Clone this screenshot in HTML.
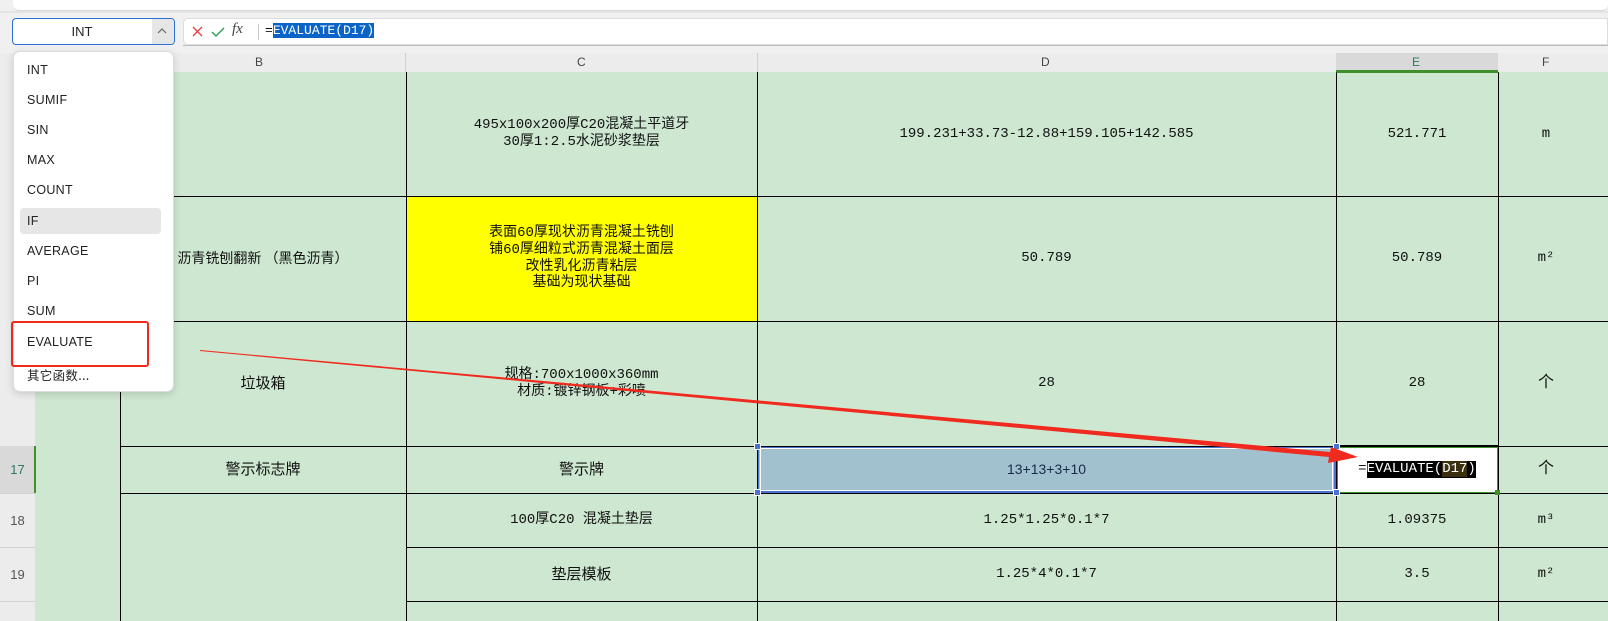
<!DOCTYPE html>
<html><head><meta charset="utf-8"><style>
*{margin:0;padding:0;box-sizing:border-box}
body{width:1608px;height:621px;overflow:hidden;background:#f0f0f0;position:relative;font-family:"Liberation Sans","Noto Sans CJK SC",sans-serif}
.a{position:absolute}
.cell{position:absolute;display:flex;align-items:center;justify-content:center;text-align:center;font-family:"Liberation Mono","Noto Sans CJK SC",monospace;font-size:14px;color:#111;line-height:16.7px;white-space:nowrap}
.hl{background:#000;position:absolute}
.vl{background:#000;position:absolute;width:1px}
.rh{position:absolute;left:0;width:35px;text-align:center;font-size:13px;color:#555;display:flex;align-items:center;justify-content:center;background:#ececec}
.mi{position:absolute;left:27px;font-size:12.5px;color:#222;letter-spacing:.3px}
</style></head><body>
<div class="a" style="left:13px;top:0;width:1595px;height:11px;background:#fff;border-bottom:1px solid #d8d8d8;border-radius:0 0 6px 6px"></div>
<div class="a" style="left:0;top:11px;width:1608px;height:2px;background:#e4e4e4"></div>
<div class="a" style="left:12px;top:18px;width:163px;height:27px;background:#fff;border:1px solid #2b6fd6;border-radius:4px"></div>
<div class="a" style="left:12px;top:24px;width:140px;text-align:center;font-size:13px;color:#222">INT</div>
<div class="a" style="left:152px;top:19px;width:22px;height:25px;background:#e6e6e6;border-radius:0 3px 3px 0"></div>
<svg class="a" style="left:155px;top:25px" width="14" height="12"><path d="M3 8 L7 4 L11 8" fill="none" stroke="#666" stroke-width="1.2"/></svg>
<div class="a" style="left:183px;top:18px;width:1425px;height:27px;background:#fff;border:1px solid #ddd;border-radius:5px 0 0 5px"></div>
<svg class="a" style="left:191px;top:25px" width="14" height="14"><path d="M2 2 L11 11 M11 2 L2 11" stroke="#e04040" stroke-width="1.3"/></svg>
<svg class="a" style="left:210px;top:25px" width="16" height="14"><path d="M2 7 L6 11 L14 3" fill="none" stroke="#2f9e5a" stroke-width="1.4"/></svg>
<div class="a" style="left:232px;top:21px;font-family:'Liberation Serif',serif;font-style:italic;font-size:15px;color:#444">fx</div>
<div class="a" style="left:258px;top:24px;width:1px;height:16px;background:#ccc"></div>
<div class="a" style="left:265px;top:23px;font-family:'Liberation Mono',monospace;font-size:13px;color:#111;line-height:16px">=<span style="background:#0a64c8;color:#fff">EVALUATE(D17)</span></div>
<div class="a" style="left:183px;top:45px;width:1425px;height:1px;background:#bbb"></div>
<div class="a" style="left:0;top:53px;width:1608px;height:19px;background:#ececec"></div>
<div class="a" style="left:1336px;top:53px;width:162px;height:19px;background:#d9d9d9"></div>
<div class="a" style="left:1336px;top:70px;width:162px;height:2px;background:#3f8f2a"></div>
<div class="a" style="left:405px;top:53px;width:1px;height:19px;background:#d0d0d0"></div>
<div class="a" style="left:757px;top:53px;width:1px;height:19px;background:#d0d0d0"></div>
<div class="a" style="left:255px;top:55px;font-size:12px;color:#444">B</div>
<div class="a" style="left:577px;top:55px;font-size:12px;color:#444">C</div>
<div class="a" style="left:1041px;top:55px;font-size:12px;color:#444">D</div>
<div class="a" style="left:1412px;top:55px;font-size:12px;color:#2a7a6a">E</div>
<div class="a" style="left:1542px;top:55px;font-size:12px;color:#444">F</div>
<div class="a" style="left:35px;top:72px;width:1573px;height:549px;background:#cde7d0"></div>
<div class="rh" style="top:72px;height:374px"></div>
<div class="rh" style="top:446px;height:47px;background:#d9d9d9;color:#2a7a6a">17</div>
<div class="rh" style="top:494px;height:53px">18</div>
<div class="rh" style="top:548px;height:53px">19</div>
<div class="rh" style="top:602px;height:19px"></div>
<div class="a" style="left:0;top:493px;width:35px;height:1px;background:#d0d0d0"></div>
<div class="a" style="left:0;top:547px;width:35px;height:1px;background:#d0d0d0"></div>
<div class="a" style="left:0;top:601px;width:35px;height:1px;background:#d0d0d0"></div>
<div class="a" style="left:34px;top:446px;width:2px;height:47px;background:#3f8f2a"></div>
<div class="a" style="left:406px;top:196px;width:351px;height:125px;background:#ffff00"></div>
<div class="a" style="left:757px;top:446px;width:579px;height:47px;background:#a2c1cf;border:2px solid #4a72d0"></div>
<div class="a" style="left:760px;top:448px;width:573px;height:43px;border:1px solid #fff"></div>
<div class="a" style="left:1336px;top:446px;width:163px;height:48px;background:#fff;border:2px solid #3f8f2a"></div>
<div class="hl" style="left:120px;top:196px;width:1488px;height:1px"></div>
<div class="hl" style="left:120px;top:321px;width:1488px;height:1px"></div>
<div class="hl" style="left:120px;top:446px;width:1488px;height:1px"></div>
<div class="hl" style="left:120px;top:493px;width:1488px;height:1px"></div>
<div class="hl" style="left:406px;top:547px;width:1202px;height:1px"></div>
<div class="hl" style="left:406px;top:601px;width:1202px;height:1px"></div>
<div class="vl" style="left:120px;top:72px;height:549px"></div>
<div class="vl" style="left:406px;top:72px;height:549px"></div>
<div class="vl" style="left:757px;top:72px;height:549px"></div>
<div class="vl" style="left:1336px;top:72px;height:549px"></div>
<div class="vl" style="left:1498px;top:72px;height:549px"></div>
<div class="a" style="left:1336px;top:72px;width:163px;height:374px;border:1px solid #000;border-top:1px solid #3f8f2a"></div>
<div class="a" style="left:754px;top:443px;width:7px;height:7px;background:#4a72d0;border:1px solid #fff"></div>
<div class="a" style="left:754px;top:489px;width:7px;height:7px;background:#4a72d0;border:1px solid #fff"></div>
<div class="a" style="left:1333px;top:443px;width:7px;height:7px;background:#4a72d0;border:1px solid #fff"></div>
<div class="a" style="left:1333px;top:489px;width:7px;height:7px;background:#4a72d0;border:1px solid #fff"></div>
<div class="a" style="left:1495px;top:490px;width:5px;height:5px;background:#3f8f2a"></div>
<div class="cell" style="left:406px;top:72px;width:351px;height:124px">495x100x200厚C20混凝土平道牙<br>30厚1:2.5水泥砂浆垫层</div>
<div class="cell" style="left:757px;top:72px;width:579px;height:124px">199.231+33.73-12.88+159.105+142.585</div>
<div class="cell" style="left:1336px;top:72px;width:162px;height:124px">521.771</div>
<div class="cell" style="left:1498px;top:72px;width:96px;height:124px">m</div>
<div class="cell" style="left:120px;top:196px;width:286px;height:125px;font-family:'Noto Sans CJK SC',sans-serif">沥青铣刨翻新 （黑色沥青）</div>
<div class="cell" style="left:406px;top:196px;width:351px;height:125px">表面60厚现状沥青混凝土铣刨<br>铺60厚细粒式沥青混凝土面层<br>改性乳化沥青粘层<br>基础为现状基础</div>
<div class="cell" style="left:757px;top:196px;width:579px;height:125px">50.789</div>
<div class="cell" style="left:1336px;top:196px;width:162px;height:125px">50.789</div>
<div class="cell" style="left:1498px;top:196px;width:96px;height:125px">m²</div>
<div class="cell" style="left:120px;top:321px;width:286px;height:125px;font-size:15px;font-family:'Noto Sans CJK SC',sans-serif">垃圾箱</div>
<div class="cell" style="left:406px;top:321px;width:351px;height:125px">规格:700x1000x360mm<br>材质:镀锌钢板+彩喷</div>
<div class="cell" style="left:757px;top:321px;width:579px;height:125px">28</div>
<div class="cell" style="left:1336px;top:321px;width:162px;height:125px">28</div>
<div class="cell" style="left:1498px;top:321px;width:96px;height:125px;font-size:16px">个</div>
<div class="cell" style="left:120px;top:446px;width:286px;height:47px;font-size:15px;font-family:'Noto Sans CJK SC',sans-serif">警示标志牌</div>
<div class="cell" style="left:406px;top:446px;width:351px;height:47px;font-size:15px;font-family:'Noto Sans CJK SC',sans-serif">警示牌</div>
<div class="cell" style="left:757px;top:446px;width:579px;height:47px;color:#1a2a4a;font-family:'Liberation Sans',sans-serif">13+13+3+10</div>
<div class="cell" style="left:1336px;top:446px;width:162px;height:47px">=<span style="background:#000;color:#fff">EVALUATE(<span style="background:#3a3010">D17</span>)</span></div>
<div class="cell" style="left:1498px;top:446px;width:96px;height:47px;font-size:16px">个</div>
<div class="cell" style="left:406px;top:493px;width:351px;height:54px;font-size:14px">100厚C20 混凝土垫层</div>
<div class="cell" style="left:757px;top:493px;width:579px;height:54px">1.25*1.25*0.1*7</div>
<div class="cell" style="left:1336px;top:493px;width:162px;height:54px">1.09375</div>
<div class="cell" style="left:1498px;top:493px;width:96px;height:54px">m³</div>
<div class="cell" style="left:406px;top:547px;width:351px;height:54px;font-size:15px;font-family:'Noto Sans CJK SC',sans-serif">垫层模板</div>
<div class="cell" style="left:757px;top:547px;width:579px;height:54px">1.25*4*0.1*7</div>
<div class="cell" style="left:1336px;top:547px;width:162px;height:54px">3.5</div>
<div class="cell" style="left:1498px;top:547px;width:96px;height:54px">m²</div>
<svg class="a" style="left:0;top:0" width="1608" height="621"><polygon points="200,350 1330,452 1331,447 1358,457 1328,463 1329,457 200,351" fill="#f02a1e"/></svg>
<div class="a" style="left:13px;top:51px;width:161px;height:341px;background:#fff;border:1px solid #ddd;border-radius:7px;box-shadow:0 2px 8px rgba(0,0,0,.15)"></div>
<div class="a" style="left:20px;top:208px;width:141px;height:26px;background:#e6e6e6;border-radius:4px"></div>
<div class="mi" style="top:63px">INT</div>
<div class="mi" style="top:93px">SUMIF</div>
<div class="mi" style="top:123px">SIN</div>
<div class="mi" style="top:153px">MAX</div>
<div class="mi" style="top:183px">COUNT</div>
<div class="mi" style="top:214px">IF</div>
<div class="mi" style="top:244px">AVERAGE</div>
<div class="mi" style="top:274px">PI</div>
<div class="mi" style="top:304px">SUM</div>
<div class="mi" style="top:335px">EVALUATE</div>
<div class="mi" style="top:365px;font-family:'Noto Sans CJK SC',sans-serif">其它函数...</div>
<div class="a" style="left:11px;top:321px;width:138px;height:46px;border:2px solid #f0281e;border-radius:3px"></div>
</body></html>
